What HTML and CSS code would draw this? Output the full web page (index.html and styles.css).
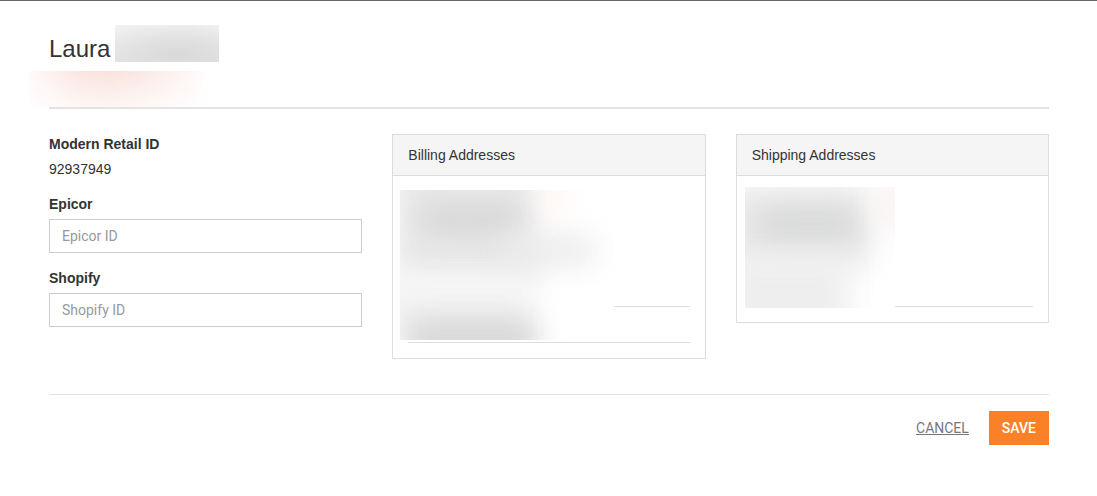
FILE: index.html
```html
<!DOCTYPE html>
<html lang="en">
<head>
  <meta charset="UTF-8" />
  <meta name="viewport" content="width=device-width, initial-scale=1.0" />
  <title>Customer</title>
  <link rel="stylesheet" href="styles.css">
</head>
<body>
  <form class="customer">
    <header class="customer-header">
      <h1>Laura <span class="redacted redacted-name"></span></h1>
      <div class="redacted redacted-email"></div>
    </header>

    <main class="columns">
      <section>
        <div class="form-group">
          <div class="label">Modern Retail ID</div>
          <div>92937949</div>
        </div>
        <div class="form-group">
          <label class="label" for="epicor-id">Epicor</label>
          <input type="text" id="epicor-id" placeholder="Epicor ID" />
        </div>
        <div class="form-group">
          <label class="label" for="shopify-id">Shopify</label>
          <input type="text" id="shopify-id" placeholder="Shopify ID" />
        </div>
      </section>

      <section class="panel">
        <h2>Billing Addresses</h2>
        <div class="panel-body">
          <div class="address"></div>
          <div class="address address-short"></div>
          <div class="redacted redacted-billing">
            <span class="smudge billing-a"></span>
            <span class="smudge billing-b"></span>
            <span class="smudge billing-c"></span>
            <span class="smudge billing-d"></span>
            <span class="smudge billing-e"></span>
            <span class="smudge billing-f"></span>
          </div>
        </div>
      </section>

      <section class="panel">
        <h2>Shipping Addresses</h2>
        <div class="panel-body">
          <div class="address"></div>
          <div class="redacted redacted-shipping">
            <span class="smudge shipping-a"></span>
            <span class="smudge shipping-b"></span>
            <span class="smudge shipping-c"></span>
            <span class="smudge shipping-d"></span>
          </div>
        </div>
      </section>
    </main>

    <footer class="actions">
      <a href="#">CANCEL</a>
      <button type="submit">SAVE</button>
    </footer>
  </form>
</body>
</html>
```

FILE: styles.css
```css
* {
  box-sizing: border-box;
}
body {
  margin: 0;
  border-top: 1px solid #666;
  background: #fff;
  color: #333;
  font: 14px/20px "Liberation Sans", Arial, sans-serif;
}
.customer {
  padding: 24px 48px 50px 49px;
}
.customer-header {
  border-bottom: 2px solid #e3e3e3;
}
h1 {
  display: flex;
  align-items: flex-start;
  gap: 5px;
  margin: 0 0 9px;
  font-size: 24px;
  font-weight: normal;
  line-height: 48px;
  height: 37px;
}
.columns {
  display: grid;
  grid-template-columns: repeat(3, 1fr);
  gap: 30px;
  align-items: start;
  margin: 25px 0 35px;
}
.form-group {
  margin-bottom: 15px;
}
.label {
  display: block;
  margin-bottom: 5px;
  font-weight: bold;
}
input {
  display: block;
  width: 100%;
  height: 34px;
  padding: 6px 12px;
  border: 1px solid #ccc;
  background: #fff;
  color: #555;
  font: 14px/20px Roboto, Arial, sans-serif;
}
input::placeholder {
  color: #999;
}

/* address panels */
.panel {
  border: 1px solid #ddd;
}
.panel h2 {
  margin: 0;
  padding: 10px 15px;
  border-bottom: 1px solid #ddd;
  background: #f5f5f5;
  font-size: 14px;
  font-weight: normal;
}
.panel-body {
  position: relative;
  padding: 15px;
}
.address {
  height: 116px;
  border-bottom: 1px solid #ddd;
}
.address-short {
  height: 36px;
}

/* hidden personal details */
.redacted {
  overflow: hidden;
}
.redacted-name {
  width: 104px;
  height: 37px;
  background: radial-gradient(ellipse 80px 34px at 60% 78%, #d9d9d9, rgba(217, 217, 217, 0)), linear-gradient(#f1f1f1, #e4e4e4);
}
.redacted-email {
  width: 176px;
  height: 36px;
  margin-left: -20px;
  background: linear-gradient(rgba(255, 255, 255, 0), rgba(255, 255, 255, 0.7)), linear-gradient(90deg, #fffafa, #fbe6e0 28%, #fae2db 45%, #fbe8e4 65%, #fef6f5 90%, #fffcfc);
}
.redacted-billing,
.redacted-shipping {
  position: absolute;
  left: 7px;
  top: 14px;
  width: 214px;
  height: 150px;
  background: #fff;
}
.redacted-shipping {
  left: 8px;
  top: 11px;
  width: 150px;
  height: 121px;
}
.smudge {
  position: absolute;
  filter: blur(14px);
}
.billing-a {
  left: -6px;
  top: -30px;
  width: 142px;
  height: 124px;
  background: #e9e9e9;
}
.billing-b {
  left: 20px;
  top: 14px;
  width: 100px;
  height: 30px;
  background: #d6d6d7;
}
.billing-c {
  left: 100px;
  top: 46px;
  width: 94px;
  height: 30px;
  background: #ebebeb;
}
.billing-d {
  left: -30px;
  top: 84px;
  width: 160px;
  height: 70px;
  background: #f5f5f5;
}
.billing-e {
  left: 6px;
  top: 126px;
  width: 130px;
  height: 50px;
  background: #d8d8d8;
}
.billing-f {
  left: 142px;
  top: -10px;
  width: 22px;
  height: 36px;
  background: #fff3ef;
}
.shipping-a {
  left: -20px;
  top: 0;
  width: 144px;
  height: 80px;
  background: #e9e9e9;
}
.shipping-b {
  left: 16px;
  top: 22px;
  width: 96px;
  height: 30px;
  background: #d6d7d7;
}
.shipping-c {
  left: -20px;
  top: 70px;
  width: 124px;
  height: 90px;
  background: #efeeef;
}
.shipping-d {
  left: 130px;
  top: -8px;
  width: 40px;
  height: 50px;
  background: #fbf2f2;
}

.actions {
  display: flex;
  justify-content: flex-end;
  align-items: center;
  gap: 20px;
  padding-top: 16px;
  border-top: 1px solid #e3e3e3;
  font-family: Roboto, Arial, sans-serif;
}
.actions a {
  color: #777;
}
.actions button {
  height: 34px;
  padding: 6px 13px;
  border: none;
  background: #fb8128;
  color: #fff;
  font: inherit;
  font-weight: 500;
  cursor: pointer;
}
```
